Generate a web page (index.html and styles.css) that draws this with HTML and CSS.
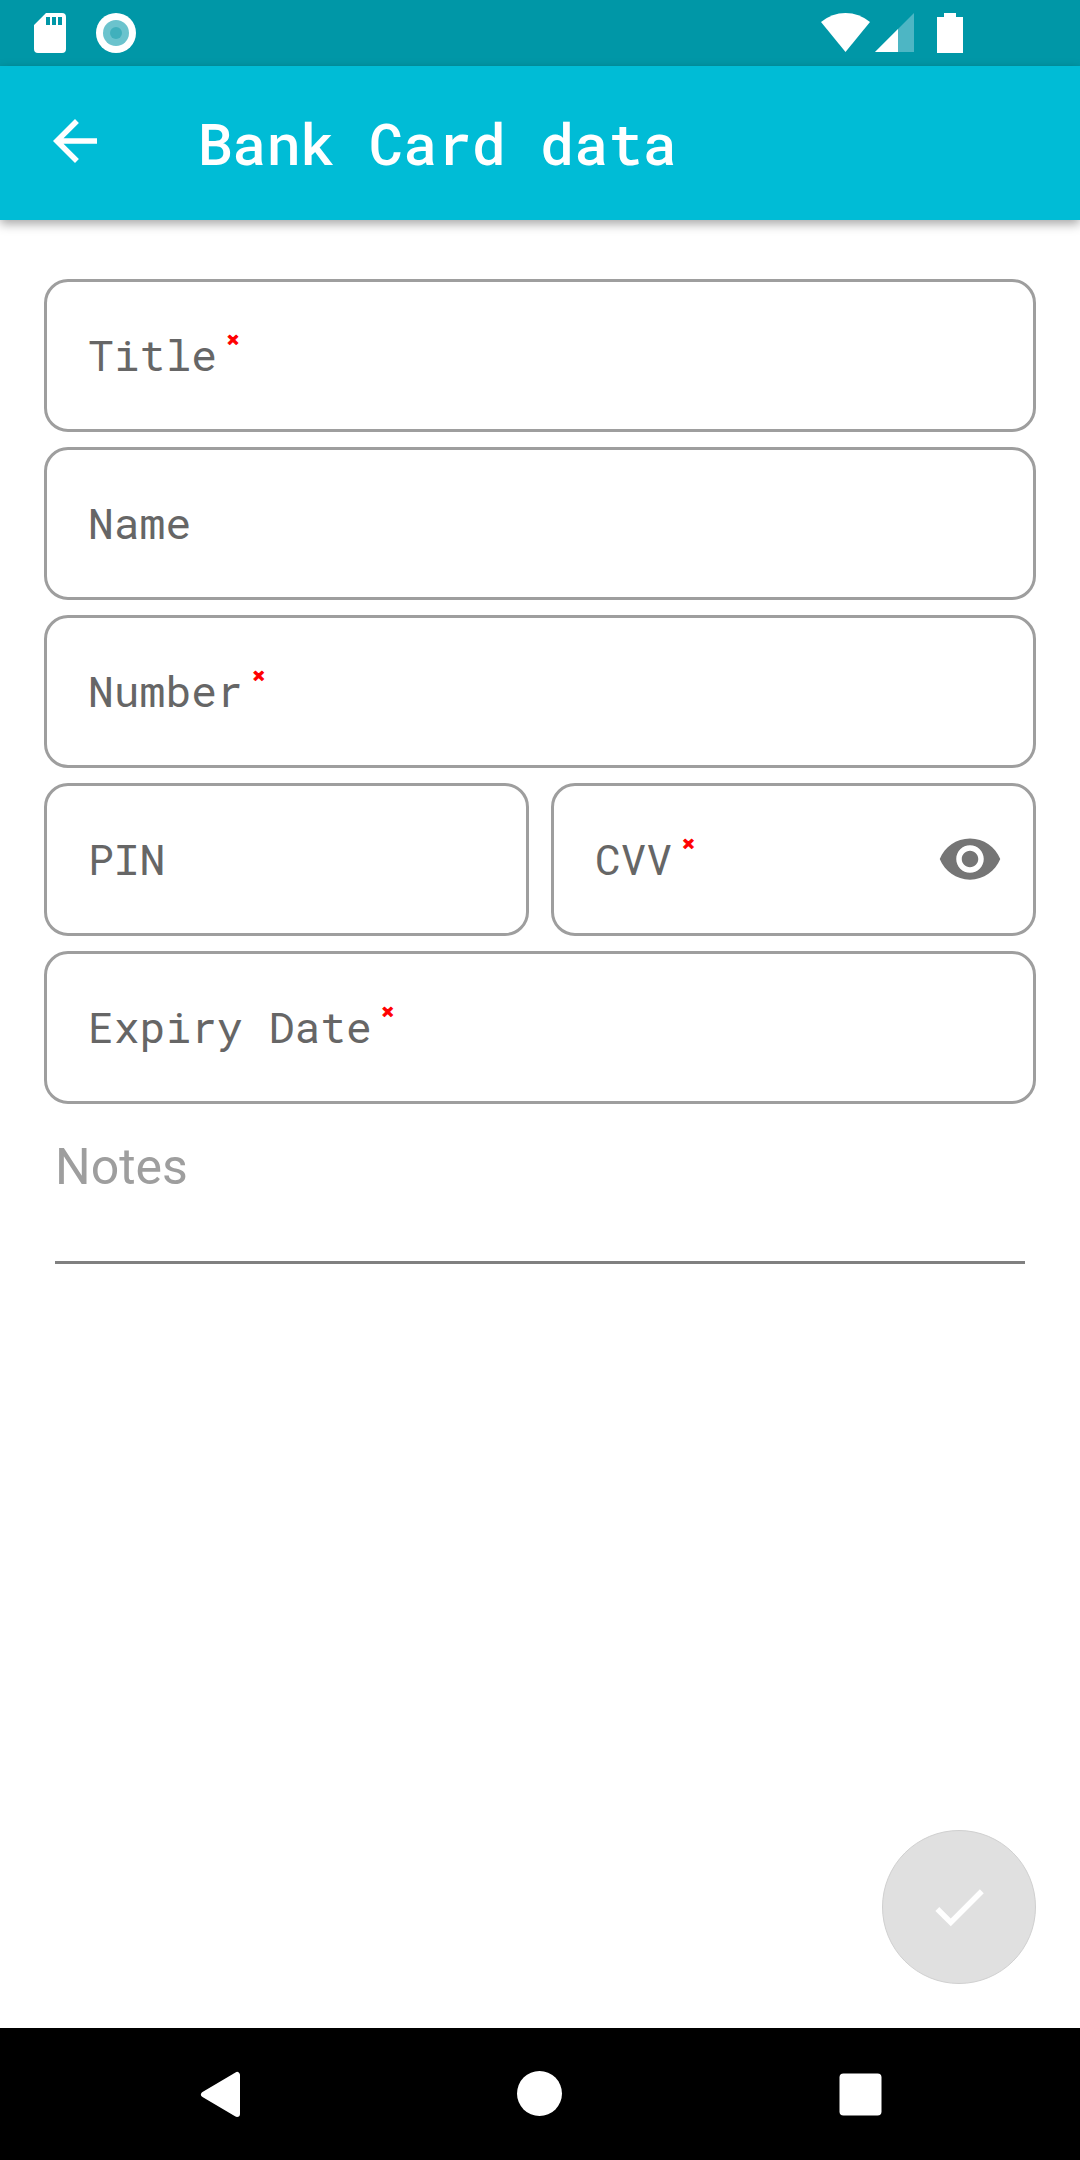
FILE: index.html
```html
<!DOCTYPE html>
<html lang="en">
<head>
  <meta charset="utf-8">
  <meta name="viewport" content="width=device-width, initial-scale=1">
  <title>Bank Card data</title>
  <link rel="stylesheet" href="styles.css">
</head>
<body>
  <div class="status-bar">
    <div class="status-group status-group-left">
      <svg class="icon-sd" viewBox="0 0 32 40" aria-hidden="true"><path fill="#fff" fill-rule="evenodd" d="M12 0H28Q32 0 32 4V36Q32 40 28 40H4Q0 40 0 36V12ZM12 4V12H16V4ZM18 4V12H22V4ZM24 4V12H28V4Z"/></svg>
      <svg class="icon-record" viewBox="0 0 40 40" aria-hidden="true"><circle cx="20" cy="20" r="20" fill="#fff"/><circle cx="20" cy="20" r="13" fill="#6bc3cd"/><circle cx="20" cy="20" r="6" fill="#40b0bc"/></svg>
    </div>
    <div class="status-group status-group-right">
      <svg class="icon-wifi" viewBox="0 0 50 40" aria-hidden="true"><path fill="#fff" d="M0 9Q11 0 24.500 0T49 9L24.500 39Z"/></svg>
      <svg class="icon-signal" viewBox="0 0 40 40" aria-hidden="true"><path fill="#4db6c4" d="M39 0V39H0Z"/><path fill="#fff" d="M23 16V39H0Z"/></svg>
      <svg class="icon-battery" viewBox="0 0 26 40" aria-hidden="true"><path fill="#fff" d="M7 0H19V4H26V40H0V4H7Z"/></svg>
    </div>
  </div>

  <header class="app-bar">
    <button class="back-button" type="button" aria-label="Back">
      <svg class="icon" viewBox="0 0 24 24" aria-hidden="true"><path fill="#fff" d="M20 11H7.83l5.59-5.59L12 4l-8 8 8 8 1.41-1.41L7.83 13H20v-2z"/></svg>
    </button>
    <h1 class="app-title">Bank Card data</h1>
  </header>

  <main class="content">
    <form class="card-form">
      <div class="field">
        <label class="field-label" for="title">Title<span class="required">×</span></label>
        <input class="field-input" id="title" type="text" required>
      </div>
      <div class="field">
        <label class="field-label" for="name">Name</label>
        <input class="field-input" id="name" type="text">
      </div>
      <div class="field">
        <label class="field-label" for="number">Number<span class="required">×</span></label>
        <input class="field-input" id="number" type="text" inputmode="numeric" required>
      </div>
      <div class="field-row">
        <div class="field">
          <label class="field-label" for="pin">PIN</label>
          <input class="field-input" id="pin" type="password" inputmode="numeric">
        </div>
        <div class="field">
          <label class="field-label" for="cvv">CVV<span class="required">×</span></label>
          <input class="field-input" id="cvv" type="password" inputmode="numeric" required>
          <button class="reveal-button" type="button" aria-label="Show CVV">
            <svg class="icon" viewBox="0 0 24 24" aria-hidden="true"><path fill="#757575" d="M12 4.5C7 4.5 2.73 7.61 1 12c1.73 4.39 6 7.5 11 7.5s9.27-3.11 11-7.5c-1.73-4.39-6-7.5-11-7.5zM12 17c-2.76 0-5-2.24-5-5s2.24-5 5-5 5 2.24 5 5-2.24 5-5 5zm0-8c-1.66 0-3 1.34-3 3s1.34 3 3 3 3-1.34 3-3-1.34-3-3-3z"/></svg>
          </button>
        </div>
      </div>
      <div class="field">
        <label class="field-label" for="expiry">Expiry Date<span class="required">×</span></label>
        <input class="field-input" id="expiry" type="text" required>
      </div>
      <textarea class="notes" rows="1" placeholder="Notes" aria-label="Notes"></textarea>
      <button class="save-button" type="submit" aria-label="Save" disabled>
        <svg class="icon" viewBox="0 0 24 24" aria-hidden="true"><path fill="#fff" d="M9 16.17L4.83 12l-1.42 1.41L9 19 21 7l-1.41-1.41z"/></svg>
      </button>
    </form>
  </main>

  <nav class="nav-bar" aria-label="System">
    <button class="nav-button" type="button" aria-label="Back">
      <svg class="icon-nav" viewBox="0 0 46 46" aria-hidden="true"><path fill="#fff" stroke="#fff" stroke-width="6" stroke-linejoin="round" d="M7 23.500L40 4V43Z"/></svg>
    </button>
    <button class="nav-button" type="button" aria-label="Home">
      <svg class="icon-nav" viewBox="0 0 46 46" aria-hidden="true"><circle cx="22.500" cy="22.500" r="22.500" fill="#fff"/></svg>
    </button>
    <button class="nav-button" type="button" aria-label="Recent apps">
      <svg class="icon-nav" viewBox="0 0 46 46" aria-hidden="true"><rect x="2.500" y="2.500" width="42" height="42" rx="4" fill="#fff"/></svg>
    </button>
  </nav>
</body>
</html>
```
FILE: styles.css
```css
* {
  box-sizing: border-box;
}

body {
  display: flex;
  flex-direction: column;
  min-height: 100vh;
  margin: 0;
  background: #fff;
  font-family: "Roboto Mono", "DejaVu Sans Mono", monospace;
}

button {
  display: flex;
  align-items: center;
  justify-content: center;
  padding: 0;
  border: 0;
  background: none;
}

svg {
  display: block;
}

.icon {
  width: 66px;
  height: 66px;
}

.status-bar {
  display: flex;
  justify-content: space-between;
  padding: 13px 117px 13px 34px;
  background: #0097a7;
}

.status-group {
  display: flex;
}

.status-group-left {
  gap: 30px;
}

.status-group-right {
  gap: 4px;
}

.icon-sd {
  width: 32px;
  height: 40px;
}

.icon-record,
.icon-signal {
  width: 40px;
  height: 40px;
}

.icon-wifi {
  width: 50px;
  height: 40px;
}

.icon-battery {
  width: 26px;
  height: 40px;
  margin-left: 18px;
}

.app-bar {
  display: flex;
  align-items: center;
  gap: 90px;
  height: 154px;
  padding: 0 42px;
  background: #00bcd6;
  box-shadow: 0 4px 10px rgba(0, 0, 0, 0.35);
}

.back-button {
  padding-bottom: 4px;
}

.app-title {
  margin: 0;
  color: #fff;
  font-size: 57px;
  font-weight: 500;
  line-height: 68px;
}

.content {
  display: flex;
  flex: 1;
  padding: 59px 44px 44px;
}

.card-form {
  display: flex;
  flex: 1;
  flex-direction: column;
  gap: 15px;
  min-width: 0;
}

.field {
  display: flex;
  flex: 1;
  align-items: center;
  min-width: 0;
  padding: 47px 30px 49px 41px;
  border: 3px solid #9e9e9e;
  border-radius: 24px;
}

.card-form > .field {
  flex: none;
}

.field-row {
  display: flex;
  gap: 22px;
}

.field-label {
  display: flex;
  flex: none;
  color: #666;
  font-size: 43px;
  line-height: 51px;
}

.required {
  margin-left: 10px;
  color: #f00;
  font-family: "DejaVu Sans Mono", monospace;
  font-size: 20px;
  font-weight: 700;
  line-height: 20px;
  -webkit-text-stroke: 1px #f00;
}

.field-input {
  flex: 1;
  min-width: 0;
  height: 51px;
  padding: 0;
  border: 0;
  outline: 0;
  background: none;
  color: #212121;
  font: inherit;
  font-size: 43px;
}

.reveal-button {
  height: 51px;
}

.notes {
  height: 160px;
  margin: -15px 11px 0;
  padding: 34px 0 0;
  border: 0;
  border-bottom: 3px solid #808080;
  outline: 0;
  background: none;
  color: #212121;
  font-family: Roboto, sans-serif;
  font-size: 50px;
  line-height: 58px;
  resize: none;
}

.notes::placeholder {
  color: #9e9e9e;
  opacity: 1;
}

.save-button {
  align-self: flex-end;
  width: 154px;
  height: 154px;
  margin-top: auto;
  border: 1px solid #d0d0d0;
  border-radius: 50%;
  background: #e0e0e0;
}

.nav-bar {
  display: grid;
  grid-template-columns: repeat(3, 1fr);
  height: 132px;
  padding: 0 60px;
  background: #000;
}

.icon-nav {
  width: 46px;
  height: 46px;
}
```
